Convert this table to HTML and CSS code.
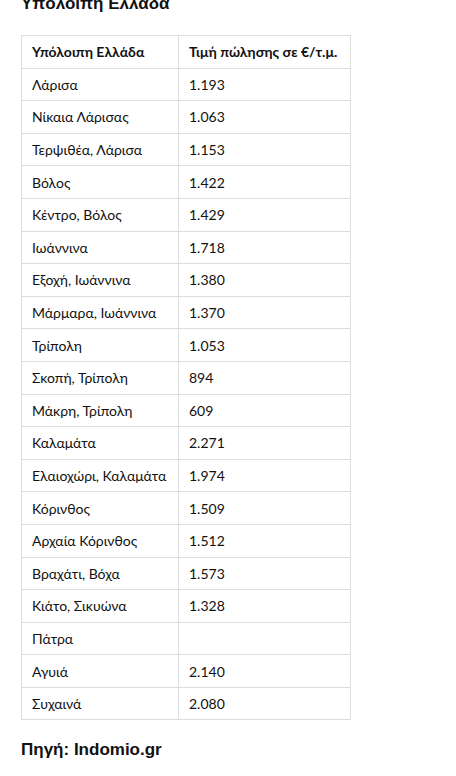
FILE: index.html
```html
<!DOCTYPE html>
<html lang="el">
<head>
<meta charset="utf-8">
<link rel="stylesheet" href="styles.css">
</head>
<body>
<div class="page">
  <h3 class="title">Υπόλοιπη Ελλάδα</h3>
  <table class="prices">
    <thead>
      <tr><th>Υπόλοιπη Ελλάδα</th><th>Τιμή πώλησης σε €/τ.μ.</th></tr>
    </thead>
    <tbody>
      <tr><td>Λάρισα</td><td>1.193</td></tr>
      <tr><td>Νίκαια Λάρισας</td><td>1.063</td></tr>
      <tr><td>Τερψιθέα, Λάρισα</td><td>1.153</td></tr>
      <tr><td>Βόλος</td><td>1.422</td></tr>
      <tr><td>Κέντρο, Βόλος</td><td>1.429</td></tr>
      <tr><td>Ιωάννινα</td><td>1.718</td></tr>
      <tr><td>Εξοχή, Ιωάννινα</td><td>1.380</td></tr>
      <tr><td>Μάρμαρα, Ιωάννινα</td><td>1.370</td></tr>
      <tr><td>Τρίπολη</td><td>1.053</td></tr>
      <tr><td>Σκοπή, Τρίπολη</td><td>894</td></tr>
      <tr><td>Μάκρη, Τρίπολη</td><td>609</td></tr>
      <tr><td>Καλαμάτα</td><td>2.271</td></tr>
      <tr><td>Ελαιοχώρι, Καλαμάτα</td><td>1.974</td></tr>
      <tr><td>Κόρινθος</td><td>1.509</td></tr>
      <tr><td>Αρχαία Κόρινθος</td><td>1.512</td></tr>
      <tr><td>Βραχάτι, Βόχα</td><td>1.573</td></tr>
      <tr><td>Κιάτο, Σικυώνα</td><td>1.328</td></tr>
      <tr><td>Πάτρα</td><td></td></tr>
      <tr><td>Αγυιά</td><td>2.140</td></tr>
      <tr><td>Συχαινά</td><td>2.080</td></tr>
    </tbody>
  </table>
  <h3 class="source">Πηγή: Indomio.gr</h3>
</div>
</body>
</html>
```
FILE: styles.css
```css
html, body {
  margin: 0;
  padding: 0;
  background: #fff;
}
.page {
  padding: 0 21px;
  color: #111;
}
.title, .source {
  font-family: "Liberation Sans", Arial, sans-serif;
  font-weight: bold;
  font-size: 17px;
  line-height: 20px;
  margin: 0;
}
.title {
  margin-top: -6px;
  margin-bottom: 21px;
}
.source {
  margin-top: 20px;
}
.prices {
  border-collapse: collapse;
  width: 330px;
  font-family: Lato, "Noto Sans", sans-serif;
  font-size: 14px;
  color: #111;
}
.prices th, .prices td {
  border: 1px solid #ddd;
  height: 32.6px;
  padding: 0 10px;
  text-align: left;
  box-sizing: border-box;
}
.prices th {
  font-weight: bold;
  font-size: 14px;
}
.prices th:first-child, .prices td:first-child {
  width: 157px;
}
```
